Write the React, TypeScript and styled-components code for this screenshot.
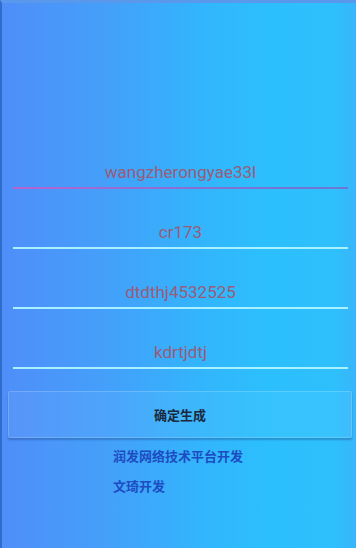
import React from "react";
import styled, { createGlobalStyle } from "styled-components";

const GlobalStyle = createGlobalStyle`
  html, body {
    margin: 0;
    padding: 0;
  }
  body {
    font-family: Roboto, "Noto Sans CJK SC", sans-serif;
  }
`;

interface FieldData {
  value: string;
  focused?: boolean;
}

const fields: FieldData[] = [
  { value: "wangzherongyae33l", focused: true },
  { value: "cr173" },
  { value: "dtdthj4532525" },
  { value: "kdrtjdtj" },
];

const credits = ["润发网络技术平台开发", "文琦开发"];

const App: React.FC = () => {
  return (
    <>
      <GlobalStyle />
      <Page>
        <Form>
          {fields.map((f) => (
            <Field key={f.value} $focused={!!f.focused}>
              {f.value}
            </Field>
          ))}
          <SubmitButton type="button">确定生成</SubmitButton>
        </Form>
        <Credits>
          {credits.map((c) => (
            <Credit key={c}>{c}</Credit>
          ))}
        </Credits>
      </Page>
    </>
  );
};

export default App;

// Styles
const Page = styled.div`
  box-sizing: border-box;
  height: 548px;
  overflow: hidden;
  padding-top: 159px;
  border-left: 2px solid #2f6ccc;
  border-top: 3px solid #5a98ec;
  background: linear-gradient(
    90deg,
    #4f8ef9 0%,
    #44a0fa 30%,
    #33b4fc 55%,
    #2cbffd 75%,
    #2ec0fd 94%,
    #38b5fb 100%
  );
`;

const Form = styled.div`
  display: flex;
  flex-direction: column;
  padding: 0 4px 0 6px;
`;

const Field = styled.div<{ $focused: boolean }>`
  margin: 0 4px 33px 5px;
  padding-bottom: 5px;
  line-height: 20px;
  font-size: 17px;
  text-align: center;
  color: #9a5c78;
  border-bottom: 2px solid #a8f2ff;
  ${({ $focused }) =>
    $focused &&
    `
    border-image: linear-gradient(90deg, #b565d2, #8a6ed4 50%, #6a78d2) 1;
  `}

  &:nth-child(4) {
    margin-bottom: 22px;
  }
`;

const SubmitButton = styled.button`
  height: 47px;
  margin: 0;
  font-family: "Noto Sans CJK SC", sans-serif;
  font-size: 13px;
  font-weight: 700;
  color: #1a2a3e;
  background: rgba(255, 255, 255, 0.05);
  border: 1px solid rgba(255, 255, 255, 0.18);
  border-radius: 2px;
  box-shadow: 0 2px 2px rgba(20, 60, 120, 0.35);
`;

const Credits = styled.div`
  display: flex;
  flex-direction: column;
  padding: 3px 0 0 111px;
`;

const Credit = styled.div`
  line-height: 30px;
  font-family: "Noto Sans CJK SC", sans-serif;
  font-size: 13px;
  font-weight: 600;
  color: #1d4cc2;
`;
